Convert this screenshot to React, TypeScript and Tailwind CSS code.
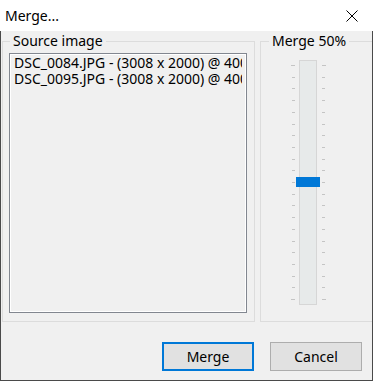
import React from "react";

const ticks = Array.from({ length: 21 }, (_, i) => Math.round(8 + i * 11.7));

function Slider() {
  return (
    <svg width={40} height={250} viewBox="0 0 40 250" className="block">
      <rect x={10.5} y={3.5} width={17} height={244} fill="#e7eaea" stroke="#d6d6d6" />
      {ticks.map((y, i) => {
        const end = i === 0 || i === ticks.length - 1;
        return (
          <g key={i} fill="#c4c4c4">
            <rect x={end ? 2 : 3} y={y} width={end ? 4 : 3} height={1} />
            <rect x={33} y={y} width={end ? 4 : 3} height={1} />
          </g>
        );
      })}
      <rect x={7} y={120} width={24} height={10} fill="#0078d7" />
    </svg>
  );
}

export default function App() {
  const files = [
    "DSC_0084.JPG - (3008 x 2000) @ 400 dpi",
    "DSC_0095.JPG - (3008 x 2000) @ 400 dpi",
  ];
  return (
    <div className="w-[373px] h-[381px] flex flex-col font-['Noto_Sans',sans-serif] text-black select-none">
      {/* title bar */}
      <div className="h-[31px] shrink-0 bg-white flex items-center justify-between pl-[5px] pr-[15px]">
        <span className="text-[14px] leading-[20px]">Merge...</span>
        <svg width={12} height={12} viewBox="0 0 12 12">
          <path d="M0.5 0.5 L11.5 11.5 M11.5 0.5 L0.5 11.5" stroke="#000" strokeWidth={1} />
        </svg>
      </div>
      {/* body */}
      <div className="flex-1 bg-[#f0f0f0] border-x border-b border-[#4a4a4a] flex flex-col overflow-hidden">
        <div className="flex gap-[5px] ml-[1px]">
          <fieldset className="w-[253px] min-w-0 h-[291px] shrink-0 border border-[#dcdcdc] pl-[6px] pr-[7px] pb-[8px]">
            <legend className="ml-[1px] px-[3px] text-[14px] leading-[20px] whitespace-nowrap">Source image</legend>
            <div className="mt-[2px] w-[238px] h-[260px] border border-[#828790] bg-[#f0f0f0] overflow-hidden">
              <div className="h-full border border-white px-[3px]">
                {files.map((f) => (
                  <div key={f} className="text-[14px] leading-[16px] whitespace-nowrap overflow-hidden">
                    {f}
                  </div>
                ))}
              </div>
            </div>
          </fieldset>
          <fieldset className="flex-1 min-w-0 h-[291px] border border-r-0 border-[#dcdcdc] pl-[8px]">
            <legend className="px-[3px] text-[14px] leading-[20px] whitespace-nowrap">Merge 50%</legend>
            <div className="ml-[20px] mt-[6px]">
              <Slider />
            </div>
          </fieldset>
        </div>
        <div className="flex justify-end gap-[16px] mt-[20px] pr-[10px]">
          <button className="w-[92px] h-[29px] border-2 border-[#0078d7] bg-[#e1e1e1] text-[14px] leading-[20px]">
            Merge
          </button>
          <button className="w-[92px] h-[29px] border border-[#adadad] bg-[#e1e1e1] text-[14px] leading-[20px]">
            Cancel
          </button>
        </div>
      </div>
    </div>
  );
}
